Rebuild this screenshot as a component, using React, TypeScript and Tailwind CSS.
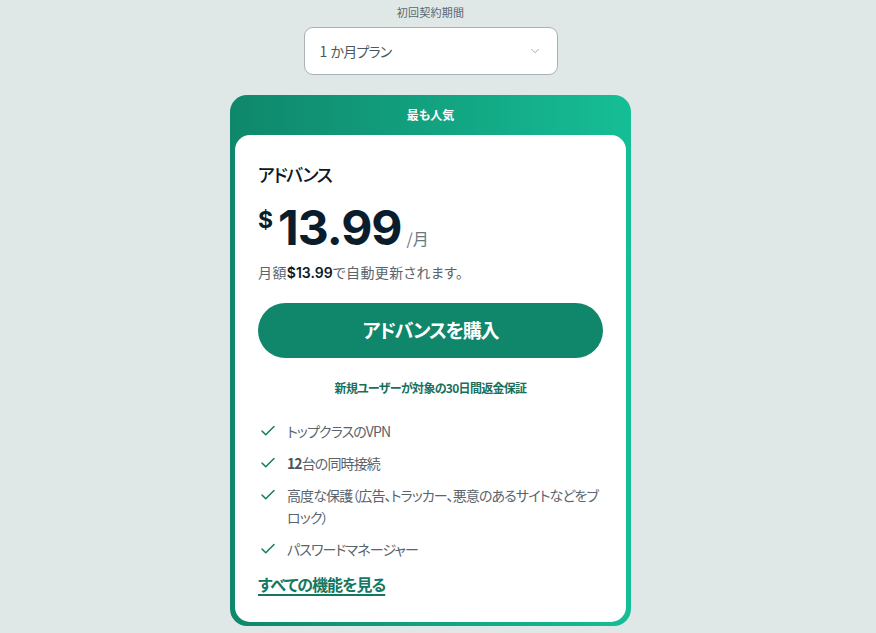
import { Check, ChevronDown } from "lucide-react";

const features: { bold?: string; text: string }[] = [
  { text: "トップクラスのVPN" },
  { bold: "12", text: "台の同時接続" },
  { text: "高度な保護（広告、トラッカー、悪意のあるサイトなどをブロック）" },
  { text: "パスワードマネージャー" },
];

export default function App() {
  return (
    <div className="min-h-[633px] w-full bg-[#dfe8e6] font-['Noto_Sans_CJK_JP','Noto_Sans',sans-serif] [font-feature-settings:'palt'] flex flex-col items-center pt-[4px] pr-[15px]">
      <p className="text-[11px] leading-[16px] text-[#5b6670] tracking-wide">初回契約期間</p>
      <button className="mt-[7px] w-[254px] h-[48px] bg-white border border-[#a9b1b6] rounded-[9px] flex items-center justify-between pl-[15px] pr-[15px]">
        <span className="text-[14px] text-[#4d5760] tracking-[-0.8px]">
          1<span className="ml-[4px]">か月プラン</span>
        </span>
        <ChevronDown className="w-[14px] h-[14px] text-[#9aa3a8]" strokeWidth={1.5} />
      </button>

      <div className="mt-[20px] w-[401px] rounded-[17px] bg-gradient-to-r from-[#0f876b] to-[#15be96] px-[5px] pb-[4px]">
        <div className="h-[40px] flex items-center justify-center">
          <span className="text-[12px] font-bold text-white">最も人気</span>
        </div>
        <div className="bg-white rounded-[15px] px-[23px] pt-[26px] pb-[26px]">
          <h2 className="text-[18px] leading-[26px] font-medium text-[#0b1a26] tracking-[-1.5px]">アドバンス</h2>
          <div className="mt-[14px] flex items-end text-[#0a1d2c] font-['Inter',sans-serif]">
            <span className="text-[23px] font-bold leading-none self-start mt-[8px]">$</span>
            <span className="ml-[5px] text-[48px] font-bold leading-[54px] tracking-[-1px]">13.99</span>
            <span className="ml-[5px] mb-[5px] text-[16px] text-[#6b7780] font-['Noto_Sans_CJK_JP',sans-serif]">/月</span>
          </div>
          <p className="mt-[7px] text-[14px] text-[#5a646c] tracking-[0.4px]">
            月額<span className="font-semibold text-[#0b1a26] font-['Inter',sans-serif] tracking-normal">$13.99</span>で自動更新されます。
          </p>
          <button className="mt-[20px] w-full h-[55px] rounded-full bg-[#10866a] text-white text-[19px] font-bold tracking-[-1.2px]">
            アドバンスを購入
          </button>
          <p className="mt-[21px] text-center text-[12px] font-semibold text-[#18705c] tracking-[-0.7px]">新規ユーザーが対象の30日間返金保証</p>

          <ul className="mt-[23px] flex flex-col gap-[10px]">
            {features.map((f, i) => (
              <li key={i} className="flex items-start gap-[10px]">
                <Check className="w-[18px] h-[18px] text-[#147a62] mt-[2px] ml-[1px] shrink-0" strokeWidth={2} />
                <span className="text-[14px] leading-[22px] text-[#5a646c] tracking-[-0.9px]">
                  {f.bold && <b className="font-bold text-[#4a545c]">{f.bold}</b>}
                  {f.text}
                </span>
              </li>
            ))}
          </ul>
          <a href="#" className="inline-block mt-[12px] text-[16px] font-bold text-[#137761] tracking-[-1px] underline underline-offset-[3px] decoration-[1.5px]">
            すべての機能を見る
          </a>
        </div>
      </div>
    </div>
  );
}
